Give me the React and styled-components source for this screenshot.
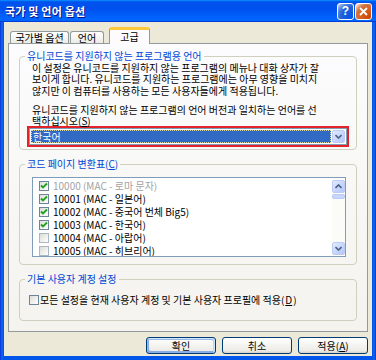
import React from 'react';
import styled, { createGlobalStyle } from 'styled-components';

const Global = createGlobalStyle`
  html, body { margin: 0; padding: 0; background: #fff; }
  body { font-family: "Noto Sans CJK KR", "Noto Sans", sans-serif; }
  * { box-sizing: border-box; }
`;

const Win = styled.div`
  width: 376px;
  height: 360px;
  display: flex;
  flex-direction: column;
  background: linear-gradient(90deg, #0831d9 0, #166aee 2px, #0055ea 3px, #0055ea calc(100% - 3px), #166aee calc(100% - 2px), #0831d9 100%);
  overflow: hidden;
`;

const TitleBar = styled.div`
  height: 22px;
  flex: none;
  display: flex;
  align-items: center;
  gap: 1px;
  padding: 0 4px 0 5px;
  background: linear-gradient(180deg, #0997ff, #0053ee 8%, #0050ee 40%, #06f 88%, #06f 93%, #005bff 95%, #003dd7 96%, #003dd7);
`;

const Title = styled.span`
  flex: 1;
  color: #fff;
  font-weight: 700;
  font-size: 11px;
  letter-spacing: 0.2px;
  text-shadow: 1px 1px #0f1089;
  white-space: nowrap;
`;

const CapButton = styled.div`
  width: 17px;
  height: 17px;
  border: 1px solid #fff;
  border-radius: 3px;
  display: flex;
  align-items: center;
  justify-content: center;
  color: #fff;
  font-family: "Liberation Sans", sans-serif;
  font-weight: 700;
  font-size: 12px;
  background: ${p => p.$close
    ? 'radial-gradient(circle at 90% 90%, #cc4600 0%, #dc6527 55%, #cd7546 70%, #ffccb2 90%, #fff 100%)'
    : 'radial-gradient(circle at 90% 90%, #0054e9 0%, #2263d5 55%, #4479e4 70%, #a3bbec 90%, #fff 100%)'};
`;

const Body = styled.div`
  flex: 1;
  margin: 0 4px 4px;
  background: #ece9d8;
  display: flex;
  flex-direction: column;
  padding: 5px 4px 0;
`;

const TabRow = styled.div`
  height: 16px;
  display: flex;
  align-items: flex-end;
  padding-left: 2px;
  position: relative;
  z-index: 1;
`;

const Tab = styled.div`
  height: ${p => (p.$active ? '17px' : '12px')};
  margin-bottom: ${p => (p.$active ? '-1px' : '0')};
  margin-left: ${p => p.$ml || 0}px;
  width: ${p => p.$w}px;
  border: 1px solid #919b9c;
  border-bottom: none;
  border-top: ${p => (p.$active ? '3px solid #ffc83c' : '1px solid #919b9c')};
  border-radius: 3px 3px 0 0;
  background: ${p => (p.$active ? '#fcfcfe' : 'linear-gradient(180deg, #fff, #ecebe6)')};
  font-size: 10px;
  line-height: ${p => (p.$active ? '13px' : '11px')};
  text-align: center;
  color: #000;
  white-space: nowrap;
`;

const Panel = styled.div`
  height: 289px;
  border: 1px solid #919b9c;
  background: linear-gradient(180deg, #fcfcfe, #f4f3ee);
  padding: 6px 10px 8px;
  display: flex;
  flex-direction: column;
  gap: 8px;
`;

const Group = styled.fieldset`
  margin: 0;
  padding: 0;
  min-width: 0;
  border: 1px solid #d0d0bf;
  border-radius: 4px;
`;

const Legend = styled.legend`
  margin-left: 5px;
  padding: 0 2px;
  color: #0046d5;
  font-size: 10px;
  line-height: 12px;
  white-space: nowrap;
`;

const GroupContent = styled.div`
  padding: ${p => p.$pad};
  font-size: 10px;
  color: #000;
`;

const Para = styled.div`
  line-height: 11.3px;
  white-space: nowrap;
  margin-bottom: ${p => p.$mb || 0}px;
`;

const RedMark = styled.div`
  margin: 0 -3px 0 -5px;
  border: 2px solid #e2232a;
`;

const Combo = styled.div`
  height: 17px;
  border: 1px solid #7f9db9;
  background: #fff;
  display: flex;
  gap: 1px;
  padding: 1px;
`;

const ComboValue = styled.div`
  flex: 1;
  background: #316ac5;
  color: #fff;
  font-size: 10px;
  line-height: 13px;
  padding-left: 2px;
  outline: 1px dotted #d8d8a0;
  outline-offset: -1px;
`;

const ArrowButton = styled.div`
  width: 13px;
  flex: none;
  height: ${p => p.$h || 13}px;
  border: 1px solid #bccbf4;
  border-radius: 2px;
  background: linear-gradient(135deg, #e4ecfd, #c3d3fd 60%, #b4c8f6);
  display: flex;
  align-items: center;
  justify-content: center;
`;

const ListBox = styled.div`
  height: 80px;
  border: 1px solid #7f9db9;
  background: #fff;
  display: flex;
  overflow: hidden;
`;

const ListItems = styled.div`
  flex: 1;
  padding: 1px 0 0 6px;
  overflow: hidden;
`;

const Item = styled.div`
  height: 13px;
  display: flex;
  align-items: center;
  gap: 4px;
  font-size: 10px;
  color: ${p => (p.$disabled ? '#a3a3a3' : '#000')};
  white-space: nowrap;
`;

const Box = styled.span`
  width: 10px;
  height: 10px;
  flex: none;
  border: 1px solid ${p => (p.$muted ? '#a9b7c3' : '#6c849c')};
  background: linear-gradient(135deg, #dcdcd7, #fff);
  display: flex;
  align-items: center;
  justify-content: center;
`;

const ScrollBar = styled.div`
  width: 13px;
  flex: none;
  display: flex;
  flex-direction: column;
  gap: 1px;
  padding: 2px 0 1px;
  background: #fbfbf8;
`;

const Thumb = styled.div`
  height: 5px;
  border: 1px solid #bccbf4;
  border-radius: 2px;
  background: #c8d6fb;
`;

const Track = styled.div`
  flex: 1;
`;

const CheckRow = styled.div`
  display: flex;
  align-items: center;
  gap: 1px;
  height: 13px;
  white-space: nowrap;
`;

const ButtonRow = styled.div`
  display: flex;
  justify-content: flex-end;
  gap: 6px;
  margin-top: 5px;
`;

const Button = styled.div`
  width: 70px;
  height: 17px;
  border: 1px solid #003c74;
  border-radius: 3px;
  background: linear-gradient(180deg, #fff, #ecebe6 86%, #d6d0c5);
  font-size: 10px;
  line-height: 15px;
  text-align: center;
  color: #000;
  box-shadow: ${p => (p.$default
    ? 'inset -1px 1px #cee7ff, inset 1px 2px #98b8ea, inset -2px 2px #bcd4f6, inset 1px -1px #89ade4, inset 2px -2px #89ade4'
    : 'none')};
`;

const Check = () => (
  <svg width="8" height="8" viewBox="0 0 8 8">
    <path d="M1 3.5 L3 5.5 L7 1.5" fill="none" stroke="#21a121" strokeWidth="1.8" />
  </svg>
);

const Chevron = ({ up }) => (
  <svg width="7" height="5" viewBox="0 0 7 5">
    <path d={up ? 'M0.5 4 L3.5 1 L6.5 4' : 'M0.5 1 L3.5 4 L6.5 1'} fill="none" stroke="#4d6185" strokeWidth="1.6" />
  </svg>
);

const items = [
  { t: '10000 (MAC - 로마 문자)', c: true, d: true },
  { t: '10001 (MAC - 일본어)', c: true },
  { t: '10002 (MAC - 중국어 번체 Big5)', c: true },
  { t: '10003 (MAC - 한국어)', c: true },
  { t: '10004 (MAC - 아랍어)', c: false },
  { t: '10005 (MAC - 히브리어)', c: false },
];

export default function App() {
  return (
    <>
      <Global />
      <Win>
        <TitleBar>
          <Title>국가 및 언어 옵션</Title>
          <CapButton>?</CapButton>
          <CapButton $close>
            <svg width="9" height="9" viewBox="0 0 9 9">
              <path d="M1 1 L8 8 M8 1 L1 8" stroke="#fff" strokeWidth="1.8" />
            </svg>
          </CapButton>
        </TitleBar>
        <Body>
          <TabRow>
            <Tab $w={59}>국가별 옵션</Tab>
            <Tab $w={34} $ml={1}>언어</Tab>
            <Tab $w={41} $ml={5} $active>고급</Tab>
          </TabRow>
          <Panel>
            <Group>
              <Legend>유니코드를 지원하지 않는 프로그램용 언어</Legend>
              <GroupContent $pad="0 10px 2px 12px">
                <Para $mb={8}>
                  이 설정은 유니코드를 지원하지 않는 프로그램의 메뉴나 대화 상자가 잘<br />
                  보이게 합니다. 유니코드를 지원하는 프로그램에는 아무 영향을 미치지<br />
                  않지만 이 컴퓨터를 사용하는 모든 사용자들에게 적용됩니다.
                </Para>
                <Para>
                  유니코드를 지원하지 않는 프로그램의 언어 버전과 일치하는 언어를 선<br />
                  택하십시오(<u>S</u>)
                </Para>
                <RedMark>
                  <Combo>
                    <ComboValue>한국어</ComboValue>
                    <ArrowButton>
                      <Chevron />
                    </ArrowButton>
                  </Combo>
                </RedMark>
              </GroupContent>
            </Group>
            <Group>
              <Legend>
                코드 페이지 변환표(<u>C</u>)
              </Legend>
              <GroupContent $pad="7px 10px 7px 12px">
                <ListBox>
                  <ListItems>
                    {items.map(it => (
                      <Item key={it.t} $disabled={it.d}>
                        <Box $muted={!it.c}>{it.c && <Check />}</Box>
                        {it.t}
                      </Item>
                    ))}
                  </ListItems>
                  <ScrollBar>
                    <ArrowButton>
                      <Chevron up />
                    </ArrowButton>
                    <Thumb />
                    <Track />
                    <ArrowButton>
                      <Chevron />
                    </ArrowButton>
                  </ScrollBar>
                </ListBox>
              </GroupContent>
            </Group>
            <Group>
              <Legend>기본 사용자 계정 설정</Legend>
              <GroupContent $pad="8px 10px 14px 9px">
                <CheckRow>
                  <Box />
                  모든 설정을 현재 사용자 계정 및 기본 사용자 프로필에 적용(<u>D</u>)
                </CheckRow>
              </GroupContent>
            </Group>
          </Panel>
          <ButtonRow>
            <Button $default>확인</Button>
            <Button>취소</Button>
            <Button>적용(<u>A</u>)</Button>
          </ButtonRow>
        </Body>
      </Win>
    </>
  );
}
